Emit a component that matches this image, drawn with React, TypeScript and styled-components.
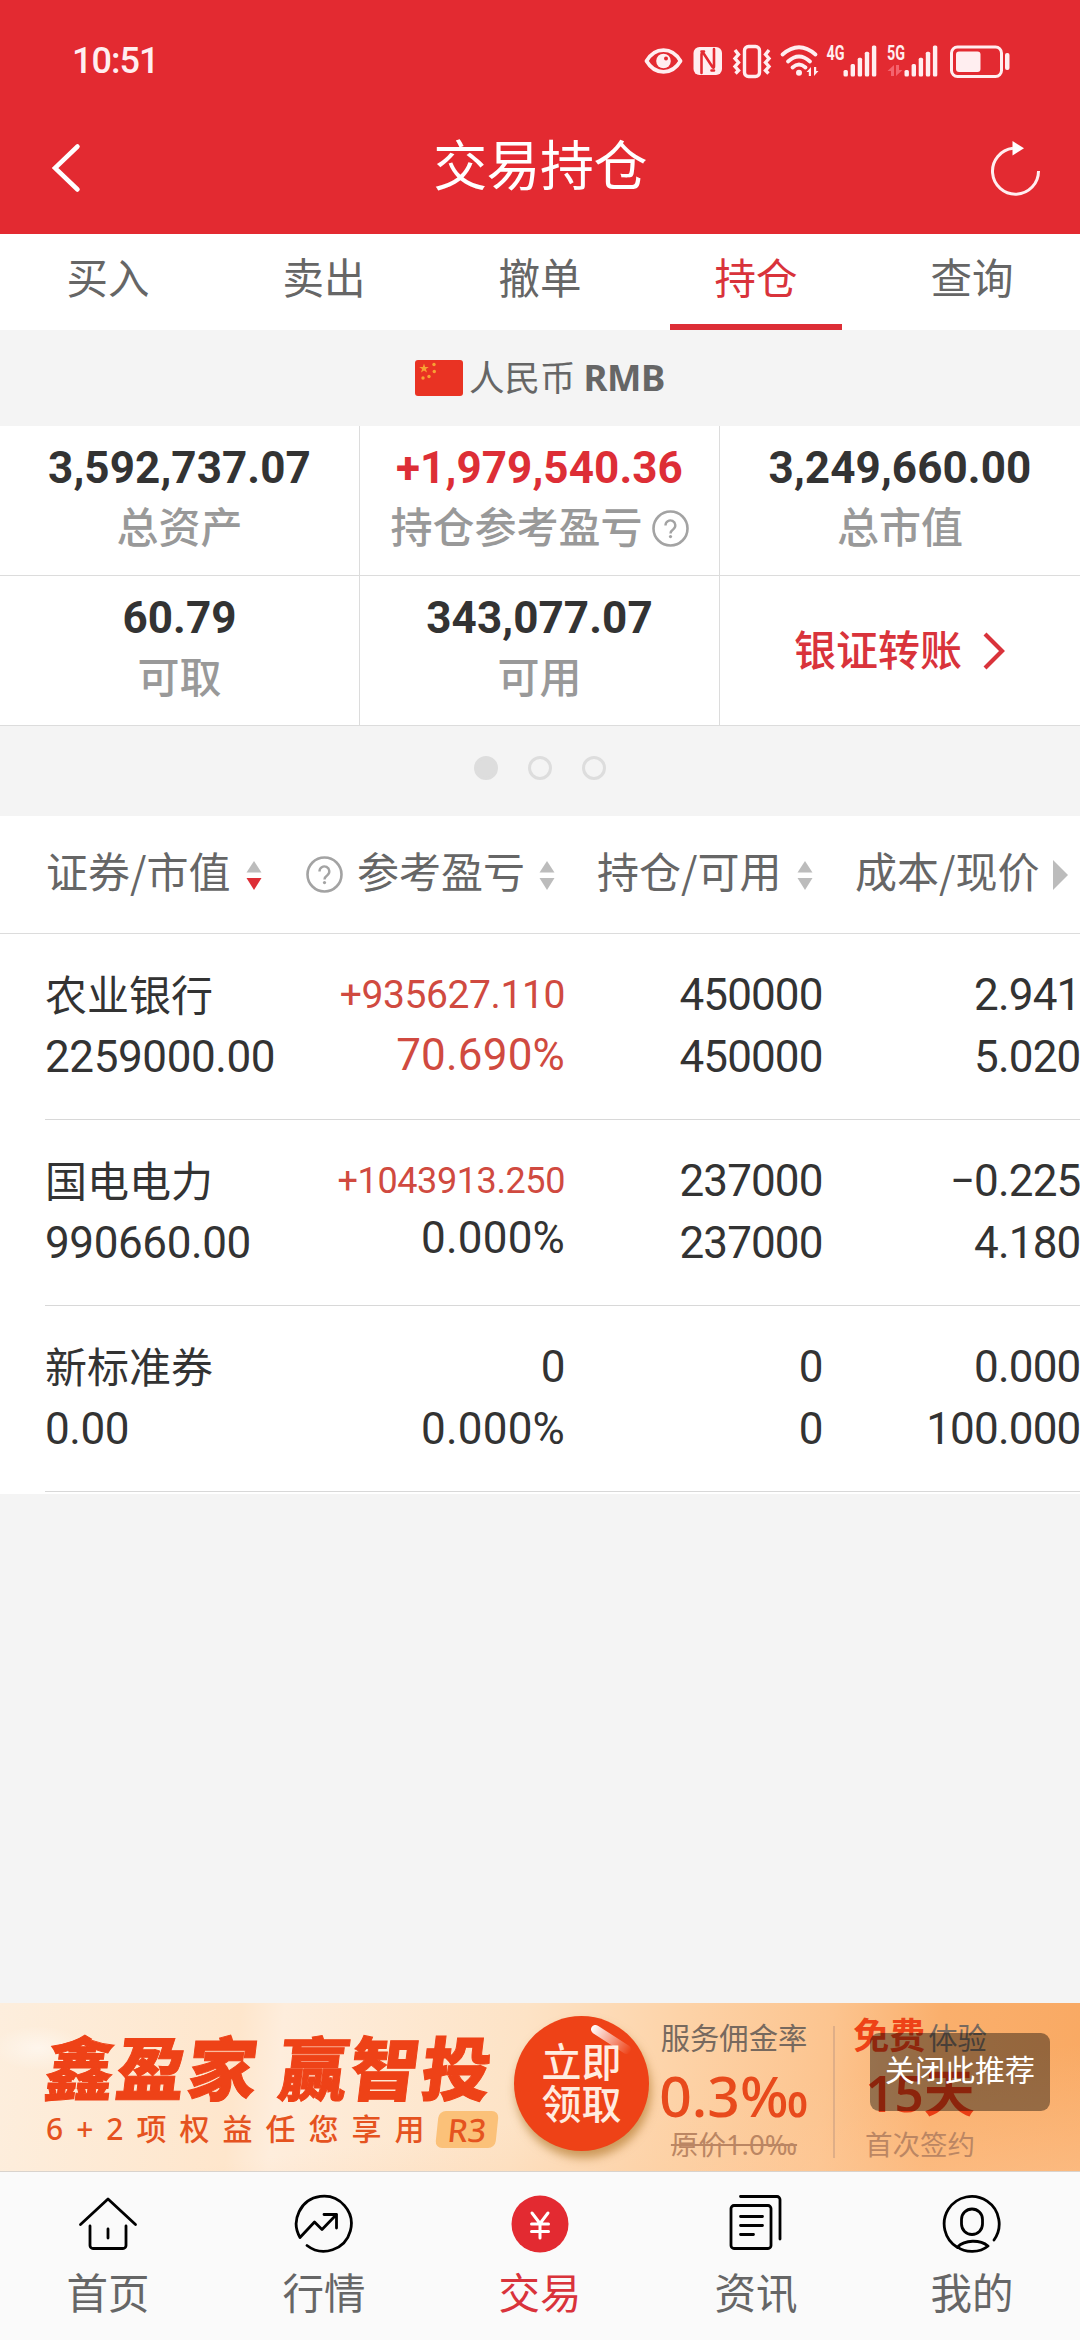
import React from "react";
import styled, { createGlobalStyle, css } from "styled-components";

const cjk = `"Noto Sans CJK SC", sans-serif`;
const num = `Roboto, "Noto Sans CJK SC", sans-serif`;

const GlobalStyle = createGlobalStyle`
  * { box-sizing: border-box; }
  body { margin: 0; background: #f4f4f4; font-family: ${cjk}; }
`;

const Screen = styled.div`
  width: 1080px;
  height: 2340px;
  display: flex;
  flex-direction: column;
  background: #f4f4f4;
  overflow: hidden;
`;

const Header = styled.header`
  height: 234px;
  flex: none;
  background: #e32a31;
  color: #fff;
`;

const StatusBar = styled.div`
  height: 122px;
  padding: 0 70px 0 72px;
  display: flex;
  align-items: center;
  justify-content: space-between;
`;

const Clock = styled.span`
  font: 500 36px/40px ${num};
  letter-spacing: -1px;
  color: #ffeef0;
`;

const StatusIcons = styled.svg`
  width: 370px;
  height: 50px;
  display: block;
`;

const TitleBar = styled.div`
  height: 112px;
  padding: 0 36px 0 48px;
  display: grid;
  grid-template-columns: 60px 1fr 60px;
  align-items: start;
`;

const BackIcon = styled.svg`
  width: 40px;
  height: 56px;
  margin-top: 18px;
`;

const RefreshIcon = styled.svg`
  width: 60px;
  height: 64px;
  margin-top: 14px;
`;

const Title = styled.h1`
  margin: 4px 0 0;
  padding-right: 12px;
  text-align: center;
  font: 400 54px/74px ${cjk};
  letter-spacing: -0.6px;
`;

const Tabs = styled.nav`
  height: 96px;
  flex: none;
  display: grid;
  grid-template-columns: repeat(5, 1fr);
  justify-items: center;
  background: #fff;
`;

const Tab = styled.div<{ $active?: boolean }>`
  width: 172px;
  height: 96px;
  padding-top: 12px;
  text-align: center;
  font: 400 41.5px/60px ${cjk};
  color: ${(p) => (p.$active ? "#d9333b" : "#666")};
  border-bottom: 6px solid ${(p) => (p.$active ? "#dd2e36" : "transparent")};
`;

const CurrencyBar = styled.div`
  height: 96px;
  flex: none;
  display: flex;
  align-items: center;
  justify-content: center;
  color: #666;
  font: 400 35.500px/50px ${cjk};
`;

const CurrencyName = styled.span`
  margin-top: -5px;
`;

const Flag = styled.svg`
  width: 48px;
  height: 36px;
  margin-right: 6px;
`;

const CurrencyCode = styled.b`
  margin: -2px 0 0 8px;
  font: 700 36.500px/50px "Noto Sans", ${cjk};
  letter-spacing: -0.4px;
`;

const Summary = styled.section`
  height: 300px;
  flex: none;
  display: grid;
  grid-template-columns: 360px 360px 360px;
  grid-template-rows: 150px 149px;
  background: #fff;
  border-bottom: 1px solid #dcdcdc;
`;

const Cell = styled.div`
  display: flex;
  flex-direction: column;
  align-items: center;
  padding-top: 17px;
  border-bottom: 1px solid #dcdcdc;
  &:not(:nth-child(3n)) { border-right: 1px solid #dcdcdc; }
  &:nth-child(n + 4) { border-bottom: 0; }
`;

const Amount = styled.div<{ $up?: boolean }>`
  font: 700 44px/50px ${num};
  letter-spacing: 0.1px;
  color: ${(p) => (p.$up ? "#dd2e36" : "#333")};
`;

const Label = styled.div`
  display: flex;
  align-items: center;
  gap: 9px;
  font: 500 42px/60px ${cjk};
  margin-top: 2px;
  color: #999;
`;

const Help = styled.svg`
  width: 37px;
  height: 37px;
  flex: none;
  margin-top: 6px;
`;

const Transfer = styled.div`
  display: flex;
  align-items: center;
  justify-content: center;
  gap: 20px;
  font: 500 42px/60px ${cjk};
  color: #d9333b;
`;

const TransferText = styled.span`
  margin-top: -6px;
`;

const Arrow = styled.svg`
  width: 24px;
  height: 40px;
`;

const Dots = styled.div`
  height: 90px;
  flex: none;
  display: flex;
  justify-content: center;
  align-items: center;
  gap: 30px;
  padding-bottom: 6px;
`;

const Dot = styled.i<{ $active?: boolean }>`
  width: 24px;
  height: 24px;
  border-radius: 50%;
  border: 3px solid #ddd;
  background: ${(p) => (p.$active ? "#ddd" : "transparent")};
`;

const Table = styled.section`
  flex: none;
  background: #fff;
  padding-bottom: 2px;
`;

const columns = css`
  display: grid;
  grid-template-columns: 256px 264px 257.500px 258px;
`;

const TableHead = styled.div`
  height: 118px;
  display: grid;
  grid-template-columns: 260px 291px 258px 1fr;
  padding: 0 0 10px 46px;
  align-items: center;
  border-bottom: 1px solid #dcdcdc;
  font: 400 42px/60px ${cjk};
  color: #666;
`;

const HeadCell = styled.div<{ $gap?: number }>`
  display: flex;
  align-items: center;
  white-space: nowrap;
  gap: ${(p) => p.$gap ?? 16}px;
`;

const HeadIcon = styled.svg<{ $w: number }>`
  width: ${(p) => p.$w}px;
  height: 30px;
  flex: none;
  margin-top: 10px;
`;

const HeadHelp = styled(Help)`
  margin: 10px 0 0;
`;

const Row = styled.div`
  ${columns}
  height: 186px;
  margin-left: 45px;
  padding-top: 30px;
  border-bottom: 1px solid #d8d8d8;
  color: #333;
`;

const Pair = styled.div<{ $right?: boolean }>`
  text-align: ${(p) => (p.$right ? "right" : "left")};
  white-space: nowrap;
`;

const Name = styled.div`
  font: 400 42px/58px ${cjk};
  margin-bottom: 4px;
`;

const Figure = styled.div<{ $up?: boolean; $size?: number; $pull?: number; $track?: number }>`
  font: 400 ${(p) => p.$size ?? 44}px/62px ${num};
  margin-bottom: ${(p) => -(p.$pull ?? 0)}px;
  letter-spacing: ${(p) => p.$track ?? -0.4}px;
  color: ${(p) => (p.$up ? "#d04a40" : "inherit")};
`;

const Blank = styled.div`
  flex: 1;
`;

const Banner = styled.section`
  position: relative;
  height: 168px;
  flex: none;
  display: flex;
  background:
    radial-gradient(ellipse 46px 22px at 38px 45px, rgba(255, 255, 255, 0.5), transparent),
    linear-gradient(172deg, transparent 60%, rgba(255, 205, 160, 0.45) 100%),
    linear-gradient(96deg, #fdeedd 0%, #fee6cc 22%, #feeddc 26%, #fde3c6 48%, #fdd3a8 62%, #fcc48f 76%, #faaf6c 86%, #f9a963 100%);
`;

const Pitch = styled.div`
  width: 514px;
  padding: 24px 0 0 46px;
`;

const Slogan = styled.div`
  font: 900 69px/76px ${cjk};
  letter-spacing: 2.3px;
  word-spacing: 2px;
  white-space: nowrap;
  color: #ee4217;
  -webkit-text-stroke: 1px #ee4217;
  transform: skewX(-7deg);
`;

const Perks = styled.div`
  display: flex;
  align-items: center;
  height: 40px;
  margin-top: 6px;
  font: 500 30px/38px "Noto Sans", ${cjk};
  letter-spacing: 13px;
  white-space: nowrap;
  color: #e5531f;
`;

const Badge = styled.span`
  width: 60px;
  height: 37px;
  border-radius: 7px;
  background: #fbc179;
  transform: skewX(-6deg);
  text-align: center;
  font: 500 32px/38px "Noto Sans", ${cjk};
  letter-spacing: 0;
`;

const Claim = styled.div`
  width: 135px;
  height: 135px;
  margin-top: 13px;
  border-radius: 50%;
  padding-top: 23px;
  text-align: center;
  color: #ffece0;
  font: 500 40px/42px ${cjk};
  box-shadow: 2px 7px 10px rgba(170, 110, 30, 0.6);
  background: #ee4217;
  position: relative;
`;

const Gloss = styled.i`
  position: absolute;
  left: 74px;
  top: 19px;
  width: 46px;
  height: 9px;
  border-radius: 5px;
  transform: rotate(33deg);
  background: linear-gradient(90deg, #fff, rgba(255, 255, 255, 0));
`;

const Offer = styled.div<{ $w: number; $ml: number }>`
  width: ${(p) => p.$w}px;
  margin-left: ${(p) => p.$ml}px;
  display: flex;
  flex-direction: column;
  align-items: center;
  white-space: nowrap;
`;

const OfferTop = styled.div`
  height: 56px;
  padding-top: 10px;
  display: flex;
  align-items: center;
  font: 400 29.3px/40px ${cjk};
  color: #77695e;
  b { font: 700 36px/40px ${cjk}; color: #ee4217; margin: -6px 3px 0 0; }
`;

const OfferValue = styled.div<{ $bold?: boolean }>`
  height: 70px;
  margin-top: ${(p) => (p.$bold ? -3 : 0)}px;
  margin-bottom: ${(p) => (p.$bold ? 3 : 0)}px;
  font: ${(p) => (p.$bold ? 600 : 500)} ${(p) => (p.$bold ? 51 : 57)}px/72px "Noto Sans", ${cjk};
  color: ${(p) => (p.$bold ? "#ea3d14" : "#e84a1c")};
`;

const OfferNote = styled.div<{ $strike?: boolean }>`
  font: 400 27.500px/36px "Noto Sans", ${cjk};
  margin-top: -2px;
  color: #bb8663;
  text-decoration: ${(p) => (p.$strike ? "line-through" : "none")};
  text-decoration-thickness: 2px;
`;

const Divider = styled.i`
  width: 2px;
  height: 132px;
  margin: 23px 0 0 25px;
  background: #dfae87;
`;

const CloseAd = styled.button`
  position: absolute;
  left: 870px;
  top: 30px;
  width: 180px;
  height: 78px;
  padding: 0 0 8px;
  border: 0;
  border-radius: 9px;
  background: rgba(0, 0, 0, 0.4);
  color: #fff;
  font: 400 30px/40px ${cjk};
`;

const BottomNav = styled.nav`
  height: 169px;
  flex: none;
  display: grid;
  grid-template-columns: repeat(5, 1fr);
  background: #fafafa;
  border-top: 1px solid #d9d3cd;
`;

const NavItem = styled.div<{ $active?: boolean }>`
  display: flex;
  flex-direction: column;
  align-items: center;
  padding-top: 22px;
  font: 400 41.5px/60px ${cjk};
  color: ${(p) => (p.$active ? "#d9333b" : "#666")};
`;

const NavIcon = styled.svg`
  width: 60px;
  height: 60px;
  margin-bottom: 7px;
  fill: none;
  stroke: #000;
  stroke-width: 2.8;
  stroke-linecap: round;
  stroke-linejoin: round;
`;

const HelpGlyph = () => (
  <>
    <circle cx="18.5" cy="18.5" r="17" fill="none" stroke="#a3a3a3" strokeWidth="2.6" />
    <path d="M13.5 15.5a4.900 4.900 0 1 1 7.800 3.800c-2 1.400-2.800 2.100-2.800 4.300" fill="none" stroke="#a3a3a3" strokeWidth="2.400" />
    <circle cx="18.500" cy="26.600" r="1.600" fill="#a3a3a3" />
  </>
);

const Sort = ({ down = "#bcbcbc" }: { down?: string }) => (
  <HeadIcon $w={16} viewBox="0 0 16 30">
    <path d="M8 1l7.500 11.500h-15z" fill="#bcbcbc" />
    <path d="M8 30L.5 18h15z" fill={down} />
  </HeadIcon>
);

const bars = (x: number) =>
  [0, 1, 2, 3, 4].map((i) => (
    <rect key={i} x={x + i * 7.1} y={70 - i * 6.1} width="4.4" height={6.5 + i * 6.1} rx="1.5" />
  ));

const starPath = "M0-5L1.200-1.600H4.800L1.900.6L3 4L0 1.900L-3 4L-1.900.6L-4.800-1.600H-1.200Z";

const holdings = [
  { name: "农业银行", value: "2259000.00", gain: "+935627.110", rate: "70.690%", up: true, rateUp: true, size: 39, pull: 2, held: "450000", cost: "2.941", price: "5.020" },
  { name: "国电电力", value: "990660.00", gain: "+1043913.250", rate: "0.000%", up: true, size: 36, pull: 5, held: "237000", cost: "−0.225", price: "4.180" },
  { name: "新标准券", value: "0.00", gain: "0", rate: "0.000%", held: "0", cost: "0.000", price: "100.000" },
];

export default function App() {
  return (
    <Screen>
      <GlobalStyle />
      <Header>
        <StatusBar>
          <Clock>10:51</Clock>
          <StatusIcons viewBox="640 36 370 50" fill="#ffeef0" stroke="none">
            <path d="M646.500 61C655 46.500 672 46.500 680.500 61C672 75.500 655 75.500 646.500 61Z" fill="none" stroke="#ffeef0" strokeWidth="3.800" strokeLinejoin="round" />
            <circle cx="663.500" cy="61" r="7.300" />
            <circle cx="666" cy="58.500" r="2" fill="#e32a31" />
            <rect x="693.500" y="47" width="28.500" height="28" rx="6" />
            <path d="M701.500 73V54.500Q701.500 51 704 54L711.500 65.500Q714 69.500 714 66V49M701.500 51.500H704M714 70.500H711.500" fill="none" stroke="#e32a31" strokeWidth="2.600" strokeLinecap="round" />
            <rect x="744.500" y="46.500" width="15" height="30" rx="4" fill="none" stroke="#ffeef0" strokeWidth="3.400" />
            <path d="M735 50l3.500 4.500-3.500 4 3.500 4-3.500 4 3.500 4-3 3M769 50l-3.500 4.500 3.500 4-3.500 4 3.500 4-3.500 4 3 3" fill="none" stroke="#ffeef0" strokeWidth="3.400" />
            <path d="M782.500 54.500Q799 40 815.500 54.500M788 61.500Q799 51.500 810 61.500M792.500 67.500Q799 61.500 805.500 67.500" fill="none" stroke="#ffeef0" strokeWidth="3.800" strokeLinecap="round" />
            <circle cx="799" cy="72.700" r="3" />
            <path d="M806.500 72l4.500-5v9h-2.200v-4zM818.500 71l-4.500 5v-9h2.200v4z" />
            <text x="826.500" y="60" fontSize="19.500" fontWeight="700" textLength="18" lengthAdjust="spacingAndGlyphs" fontFamily="Roboto">4G</text>
            {bars(843.5)}
            <text x="887" y="60" fontSize="19.500" fontWeight="700" textLength="18" lengthAdjust="spacingAndGlyphs" fontFamily="Roboto">5G</text>
            <path d="M887.500 71l6.500-6v11h-3v-5zM902.500 70l-6.500 6V65h3v5z" fill="#f4636d" />
            {bars(904.5)}
            <rect x="951.500" y="47" width="50" height="29.500" rx="6" fill="none" stroke="#ffeef0" strokeWidth="3" />
            <rect x="956" y="51.500" width="24.500" height="20.500" rx="3" />
            <rect x="1005" y="53" width="4.500" height="17" rx="2" />
          </StatusIcons>
        </StatusBar>
        <TitleBar>
          <BackIcon viewBox="0 0 40 56">
            <path d="M29.500 6.500L7 28L29.500 49.500" fill="none" stroke="#fff" strokeWidth="4.500" strokeLinecap="round" />
          </BackIcon>
          <Title>交易持仓</Title>
          <RefreshIcon viewBox="984 136 60 64">
            <path d="M1013 148.300A23 23 0 1 0 1038.500 171" fill="none" stroke="#ffeef0" strokeWidth="3" />
            <path d="M1012.500 141V155.500L1024 148.300Z" fill="#fff" />
          </RefreshIcon>
        </TitleBar>
      </Header>

      <Tabs>
        {["买入", "卖出", "撤单", "持仓", "查询"].map((t) => (
          <Tab key={t} $active={t === "持仓"}>{t}</Tab>
        ))}
      </Tabs>

      <CurrencyBar>
        <Flag viewBox="0 0 48 36">
          <rect width="48" height="36" rx="3" fill="#e93323" />
          <g fill="#f7a234">
            <path d={starPath} transform="translate(9 8.500)" />
            <circle cx="19" cy="4.500" r="1.700" />
            <circle cx="19.300" cy="11.500" r="1.700" />
            <circle cx="14" cy="16.500" r="1.700" />
            <circle cx="8" cy="18" r="1.700" />
          </g>
        </Flag>
        <CurrencyName>人民币</CurrencyName>
        <CurrencyCode>RMB</CurrencyCode>
      </CurrencyBar>

      <Summary>
        <Cell><Amount>3,592,737.07</Amount><Label>总资产</Label></Cell>
        <Cell>
          <Amount $up>+1,979,540.36</Amount>
          <Label>持仓参考盈亏<Help viewBox="0 0 37 37"><HelpGlyph /></Help></Label>
        </Cell>
        <Cell><Amount>3,249,660.00</Amount><Label>总市值</Label></Cell>
        <Cell><Amount>60.79</Amount><Label>可取</Label></Cell>
        <Cell><Amount>343,077.07</Amount><Label>可用</Label></Cell>
        <Transfer>
          <TransferText>银证转账</TransferText>
          <Arrow viewBox="0 0 24 40">
            <path d="M3 3L20 20L3 37" fill="none" stroke="#d9333b" strokeWidth="4.200" />
          </Arrow>
        </Transfer>
      </Summary>

      <Dots><Dot $active /><Dot /><Dot /></Dots>

      <Table>
        <TableHead>
          <HeadCell>证券/市值<Sort down="#dd2e36" /></HeadCell>
          <HeadCell $gap={14}><HeadHelp viewBox="0 0 37 37"><HelpGlyph /></HeadHelp>参考盈亏<Sort /></HeadCell>
          <HeadCell>持仓/可用<Sort /></HeadCell>
          <HeadCell $gap={14}>成本/现价
            <HeadIcon $w={15} viewBox="0 0 15 30"><path d="M0 0L15 15L0 30Z" fill="#bcbcbc" /></HeadIcon>
          </HeadCell>
        </TableHead>
        {holdings.map((h) => (
          <Row key={h.name}>
            <Pair><Name>{h.name}</Name><Figure>{h.value}</Figure></Pair>
            <Pair $right>
              <Figure $up={h.up} $size={h.size} $pull={h.pull}>{h.gain}</Figure>
              <Figure $up={h.rateUp} $track={0.2}>{h.rate}</Figure>
            </Pair>
            <Pair $right><Figure $track={-0.9}>{h.held}</Figure><Figure $track={-0.9}>{h.held}</Figure></Pair>
            <Pair $right><Figure $track={-0.8}>{h.cost}</Figure><Figure $track={-0.8}>{h.price}</Figure></Pair>
          </Row>
        ))}
      </Table>

      <Blank />

      <Banner>
        <Pitch>
          <Slogan>鑫盈家 赢智投</Slogan>
          <Perks>6+2项权益任您享用<Badge>R3</Badge></Perks>
        </Pitch>
        <Claim>立即<br />领取<Gloss /></Claim>
        <Offer $w={148} $ml={11}>
          <OfferTop>服务佣金率</OfferTop>
          <OfferValue>0.3‰</OfferValue>
          <OfferNote $strike>原价1.0‰</OfferNote>
        </Offer>
        <Divider />
        <Offer $w={134} $ml={18}>
          <OfferTop><b>免费</b>体验</OfferTop>
          <OfferValue $bold>15天</OfferValue>
          <OfferNote>首次签约</OfferNote>
        </Offer>
        <CloseAd>关闭此推荐</CloseAd>
      </Banner>

      <BottomNav>
        <NavItem>
          <NavIcon viewBox="0 0 60 60">
            <path d="M2.500 30.500L30 5L57.500 30.500M12 32v19.500a3 3 0 0 0 3 3h30a3 3 0 0 0 3-3V32M30 35v9" />
          </NavIcon>首页
        </NavItem>
        <NavItem>
          <NavIcon viewBox="0 0 60 60">
            <path d="M13 51.500A27.500 27.500 0 1 0 6 43.500L20.500 28L28 35.500L42.500 20.500M30 20.500H42.500V34" />
          </NavIcon>行情
        </NavItem>
        <NavItem $active>
          <NavIcon viewBox="0 0 60 60">
            <circle cx="30" cy="30" r="28.500" fill="#e32a31" stroke="none" />
            <path d="M22 19l8 10.500L38 19M21.500 30h17M21.500 37.500h17M30 30v14" stroke="#fff" strokeWidth="3" />
          </NavIcon>交易
        </NavItem>
        <NavItem>
          <NavIcon viewBox="0 0 60 60">
            <rect x="5" y="11.500" width="40" height="43" rx="3" />
            <path d="M14.500 2.500H51a3 3 0 0 1 3 3V45M14.500 22.500h22M14.500 31.500h22M14.500 40.500h13" />
          </NavIcon>资讯
        </NavItem>
        <NavItem>
          <NavIcon viewBox="0 0 60 60">
            <path d="M15.500 53.500A27.500 27.500 0 1 1 52 46M15.500 53C23 45.500 38 45.500 46 52C38 59 23 59 15.500 53Z" />
            <rect x="19.500" y="15" width="21" height="25.500" rx="10.500" />
          </NavIcon>我的
        </NavItem>
      </BottomNav>
    </Screen>
  );
}
